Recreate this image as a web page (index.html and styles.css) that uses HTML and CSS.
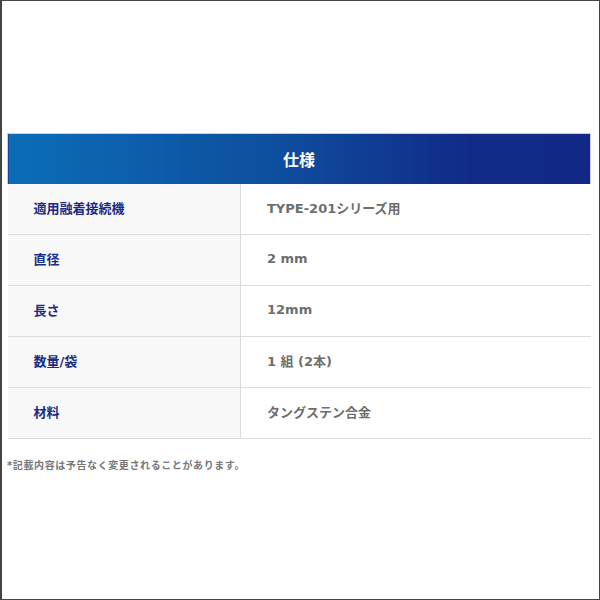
FILE: index.html
```html
<!DOCTYPE html>
<html lang="ja">
<head>
<meta charset="utf-8">
<link rel="stylesheet" href="styles.css">
</head>
<body>
<div class="frame">
  <table class="spec">
    <colgroup>
      <col class="col-label">
      <col class="col-value">
    </colgroup>
    <thead>
      <tr><th colspan="2" class="head">仕様</th></tr>
    </thead>
    <tbody>
      <tr><th>適用融着接続機</th><td>TYPE-201シリーズ用</td></tr>
      <tr><th>直径</th><td>2 mm</td></tr>
      <tr><th>長さ</th><td>12mm</td></tr>
      <tr><th>数量/袋</th><td>1 組 (2本)</td></tr>
      <tr><th>材料</th><td>タングステン合金</td></tr>
    </tbody>
  </table>
  <p class="note">*記載内容は予告なく変更されることがあります。</p>
</div>
</body>
</html>
```
FILE: styles.css
```css
html, body {
  margin: 0;
  padding: 0;
  background: #fff;
}
.frame {
  box-sizing: border-box;
  width: 600px;
  height: 600px;
  border: 1px solid #444;
  border-left-width: 2px;
  padding: 132px 8px 0 5px;
  font-family: "DejaVu Sans", "Noto Sans CJK JP", sans-serif;
}
.spec {
  width: 584px;
  border-collapse: collapse;
  table-layout: fixed;
}
.col-label {
  width: 233px;
}
.spec .head {
  height: 50px;
  padding: 0;
  text-align: center;
  color: #fff;
  font-size: 16px;
  font-weight: 700;
  background: linear-gradient(90deg, #0b6db6 0%, #0e4f9f 45%, #112a88 80%, #112886 100%);
  border: 1px solid #c9cfd9;
  border-bottom: none;
}
.spec tbody th,
.spec tbody td {
  height: 46px;
  padding: 0 0 4px 26px;
  font-size: 13px;
  font-weight: 700;
  text-align: left;
  border-bottom: 1px solid #dcdcdc;
}
.spec tbody th {
  color: #1b2c84;
  background: #f8f8f8;
  border-right: 1px solid #dcdcdc;
}
.spec tbody td {
  color: #6e6e6e;
  background: #fff;
}
.note {
  margin: 18px 0 0 0;
  font-size: 10px;
  letter-spacing: 0.6px;
  font-weight: 700;
  color: #777;
}
```
